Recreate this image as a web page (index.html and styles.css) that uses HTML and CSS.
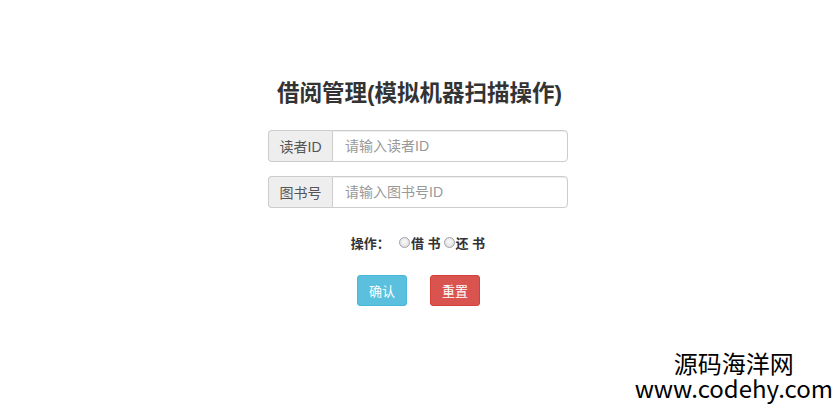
FILE: index.html
```html
<!DOCTYPE html>
<html lang="zh-CN">
<head>
    <meta charset="UTF-8">
    <meta name="viewport" content="width=device-width, initial-scale=1.0">
    <title>借阅管理</title>
    <link rel="stylesheet" href="styles.css">
</head>
<body>
    <div class="borrow-container">
        <h2>借阅管理(模拟机器扫描操作)</h2>
        <div class="input-group">
            <span class="addon">读者ID</span>
            <input type="text" placeholder="请输入读者ID">
        </div>
        <div class="input-group">
            <span class="addon">图书号</span>
            <input type="text" placeholder="请输入图书号ID">
        </div>
        <div class="op-row">
            <span class="op-label">操作：</span>
            <label class="radio"><input type="radio" name="op">借 书</label>
            <label class="radio"><input type="radio" name="op">还 书</label>
        </div>
        <div class="btn-row">
            <button class="btn btn-info">确认</button>
            <button class="btn btn-danger">重置</button>
        </div>
    </div>
    <div class="watermark">
        <div class="wm-cn">源码海洋网</div>
        <div class="wm-en">www.codehy.com</div>
    </div>
</body>
</html>
```

FILE: styles.css
```css
body {
    margin: 0;
    font-family: "Liberation Sans", "Noto Sans CJK SC", sans-serif;
    background-color: #fff;
    color: #333;
    width: 839px;
    height: 410px;
    position: relative;
    overflow: hidden;
}
.borrow-container {
    display: flex;
    flex-direction: column;
    align-items: center;
    padding-top: 78px;
}
.borrow-container h2 {
    margin: 0 0 20px 0;
    font-size: 22.5px;
    line-height: 32px;
    font-weight: bold;
    color: #333;
}
.input-group {
    display: flex;
    width: 300px;
    height: 32px;
    margin-bottom: 14px;
    margin-right: 3px;
}
.addon {
    box-sizing: border-box;
    width: 64px;
    display: flex;
    align-items: center;
    justify-content: center;
    font-size: 14px;
    color: #555;
    background-color: #eee;
    border: 1px solid #ccc;
    border-right: none;
    border-radius: 4px 0 0 4px;
}
.input-group input {
    flex: 1;
    box-sizing: border-box;
    height: 32px;
    padding: 6px 12px;
    font-size: 14px;
    font-family: "Liberation Sans", "Noto Sans CJK SC", sans-serif;
    color: #555;
    border: 1px solid #ccc;
    border-radius: 0 4px 4px 0;
    box-shadow: inset 0 1px 1px rgba(0, 0, 0, 0.075);
    outline: none;
}
.input-group input::placeholder {
    color: #999;
}
.op-row {
    display: flex;
    align-items: center;
    margin-top: 8px;
    height: 24px;
    font-size: 13px;
    font-weight: bold;
    color: #333;
}
.op-label {
    margin-right: 9px;
}
.radio {
    display: flex;
    align-items: center;
    margin-right: 3px;
}
.radio input {
    appearance: none;
    box-sizing: border-box;
    margin: 0 1px 0 0;
    width: 11px;
    height: 11px;
    border: 1px solid #a0a0a8;
    border-radius: 50%;
    background: radial-gradient(circle at 50% 40%, #fafafa, #d8d8dc);
}
.btn-row {
    display: flex;
    gap: 23px;
    margin-top: 21px;
    margin-right: 2px;
}
.btn {
    width: 50px;
    height: 31px;
    font-size: 13px;
    font-family: "Liberation Sans", "Noto Sans CJK SC", sans-serif;
    color: #fff;
    border: 1px solid transparent;
    border-radius: 3px;
    cursor: pointer;
}
.btn-info {
    background-color: #5bc0de;
    border-color: #46b8da;
}
.btn-danger {
    background-color: #d9534f;
    border-color: #d43f3a;
}
.watermark {
    position: absolute;
    right: 6px;
    bottom: 9px;
    text-align: center;
    font-family: "Noto Sans CJK SC", "Noto Sans", sans-serif;
    color: #000;
}
.wm-cn {
    font-size: 24px;
    line-height: 24px;
}
.wm-en {
    font-size: 24px;
    line-height: 26px;
}
```
